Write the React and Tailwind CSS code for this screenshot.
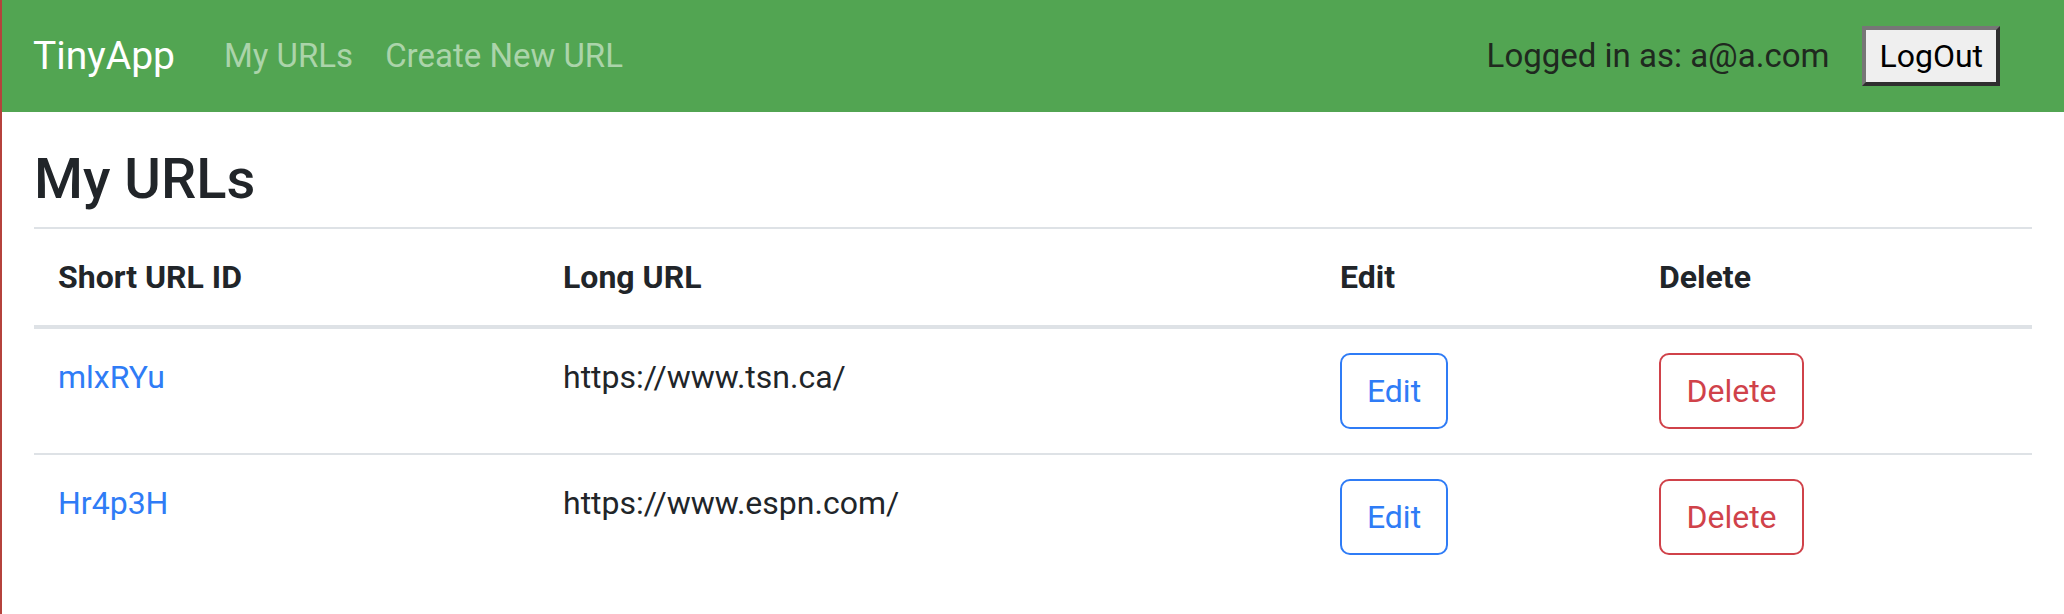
import React from "react";

const urls = [
  { id: "mlxRYu", longURL: "https://www.tsn.ca/" },
  { id: "Hr4p3H", longURL: "https://www.espn.com/" },
];

function Navbar() {
  return (
    <nav className="h-[112px] bg-[#52a552] flex items-center pl-[31px] pr-[64px]">
      <a href="#" className="text-[39px] leading-[60px] text-white mr-[33px]">
        TinyApp
      </a>
      <a href="#" className="text-[33px] leading-[48px] text-[#abd4aa] px-[16px]">
        My URLs
      </a>
      <a href="#" className="text-[33px] leading-[48px] text-[#abd4aa] px-[16px]">
        Create New URL
      </a>
      <div className="ml-auto flex items-center gap-[33px]">
        <span className="text-[33px] leading-[48px] text-[#1f291f]">
          Logged in as: a@a.com
        </span>
        <button className="h-[60px] px-[13px] bg-[#efefef] text-black text-[32px] leading-none border-4 border-t-[#767676] border-l-[#767676] border-b-[#2f2f2f] border-r-[#2f2f2f]">
          LogOut
        </button>
      </div>
    </nav>
  );
}

function App() {
  return (
    <div className="min-h-screen bg-white border-l-2 border-[#b5423c] font-['Roboto','Helvetica_Neue',Arial,sans-serif] text-[#212529]">
      <Navbar />
      <main className="px-[32px]">
        <h1 className="text-[56px] font-medium leading-[1.2] mt-[34px] mb-[14px]">
          My URLs
        </h1>
        <table className="w-full table-fixed border-collapse text-[32px] leading-[48px] align-top">
          <colgroup>
            <col className="w-[505px]" />
            <col className="w-[777px]" />
            <col className="w-[319px]" />
            <col className="w-[397px]" />
          </colgroup>
          <thead>
            <tr className="border-t-2 border-b-4 border-[#dee2e6]">
              <th className="p-[24px] text-left font-bold">Short URL ID</th>
              <th className="p-[24px] text-left font-bold">Long URL</th>
              <th className="p-[24px] text-left font-bold">Edit</th>
              <th className="p-[24px] text-left font-bold">Delete</th>
            </tr>
          </thead>
          <tbody>
            {urls.map((url, i) => (
              <tr
                key={url.id}
                className={i < urls.length - 1 ? "border-b-2 border-[#dee2e6]" : ""}
              >
                <td className="p-[24px] align-top">
                  <a href="#" className="text-[#2f7cf6]">
                    {url.id}
                  </a>
                </td>
                <td className="p-[24px] align-top">{url.longURL}</td>
                <td className="p-[24px] align-top">
                  <button className="w-[108px] py-[12px] border-2 border-[#2f7cf6] rounded-[10px] text-[#2f7cf6] text-[32px] leading-[48px]">
                    Edit
                  </button>
                </td>
                <td className="p-[24px] align-top">
                  <button className="w-[145px] py-[12px] border-2 border-[#d0424a] rounded-[10px] text-[#d0424a] text-[32px] leading-[48px]">
                    Delete
                  </button>
                </td>
              </tr>
            ))}
          </tbody>
        </table>
      </main>
    </div>
  );
}

export default App;
